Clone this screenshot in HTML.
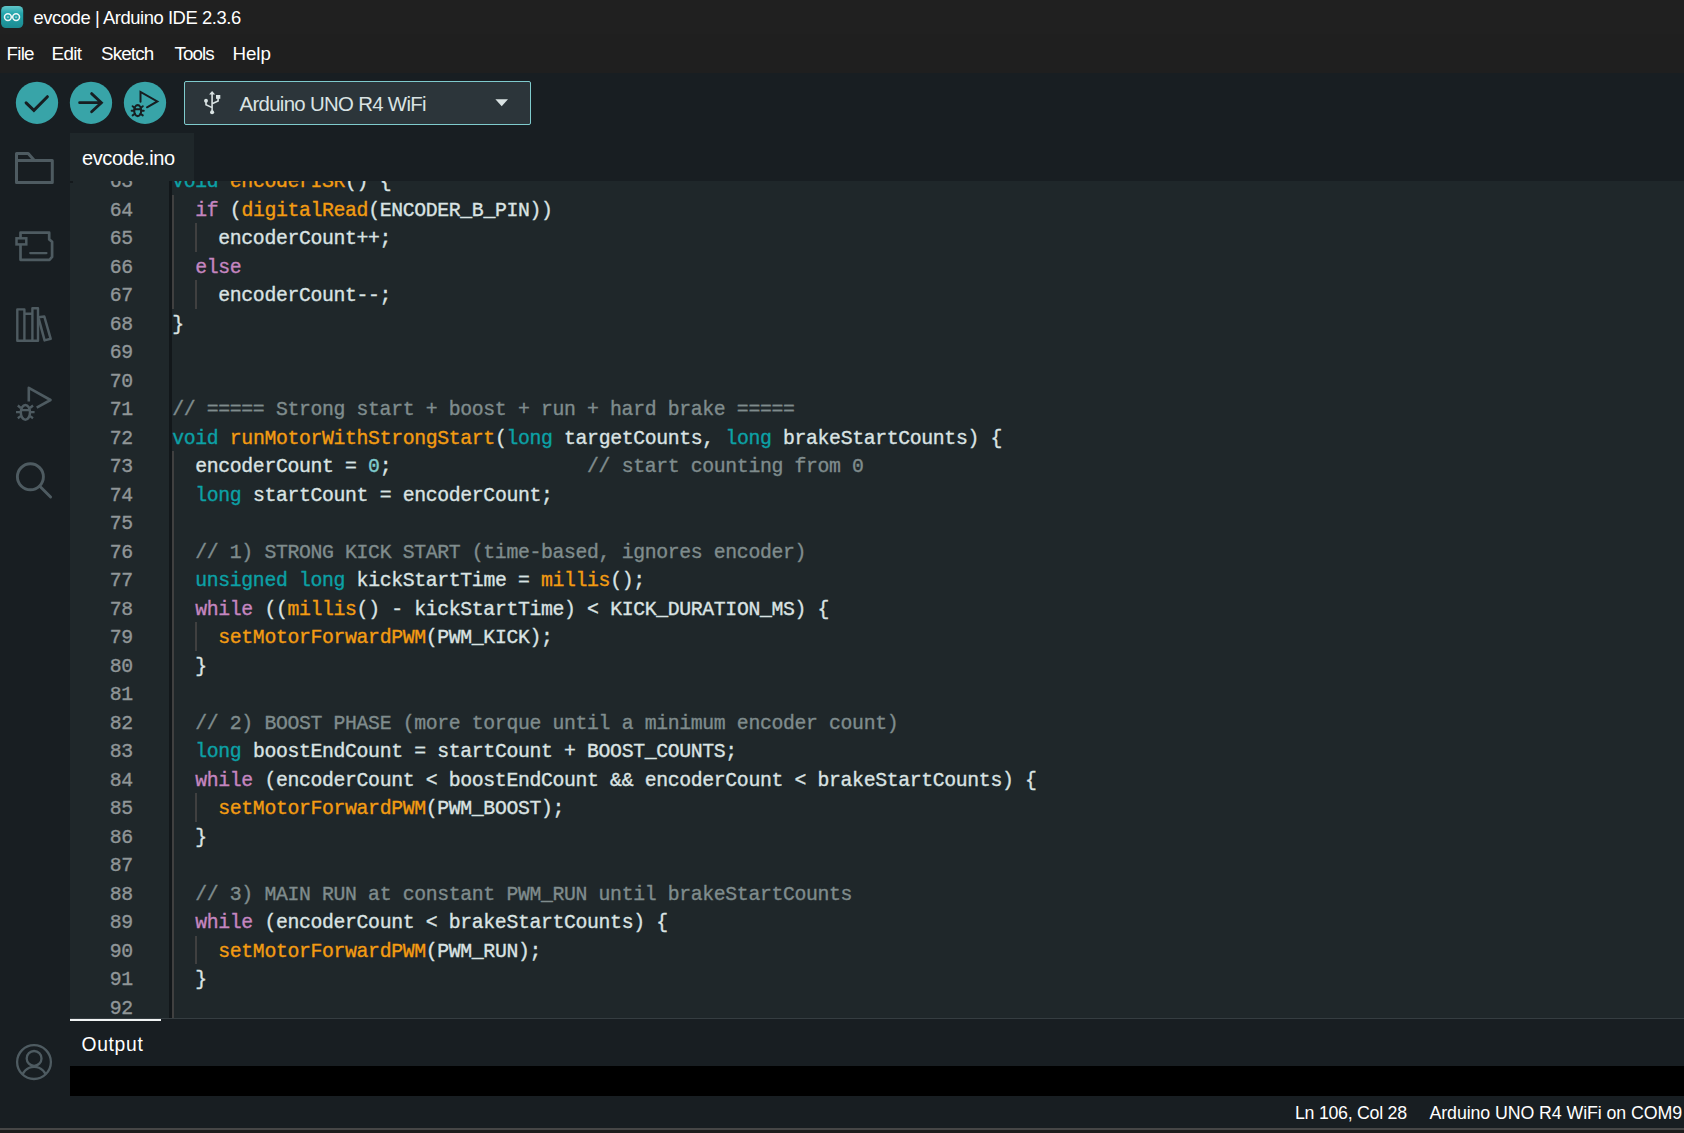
<!DOCTYPE html><html><head><meta charset="utf-8"><title>evcode | Arduino IDE 2.3.6</title><style>
*{margin:0;padding:0;box-sizing:border-box}
html,body{width:1684px;height:1133px;overflow:hidden;background:#181e22}
body{position:relative;font-family:"Liberation Sans",sans-serif}
.abs{position:absolute}
.t{position:absolute;white-space:pre;line-height:1;font-family:"Liberation Sans",sans-serif}
#editor{position:absolute;left:70px;top:181px;width:1614px;height:837px;background:#1f272a;overflow:hidden}
.ln,.cl{position:absolute;height:28.5px;line-height:28.5px;font-family:"Liberation Mono",monospace;font-size:19.8px;letter-spacing:-0.3469px;white-space:pre;-webkit-text-stroke-width:0.35px}
.ln{color:#909698;text-align:right;left:0;width:62.900000000000006px}
.cl{color:#dae3e3;left:102.19999999999999px}
.g{position:absolute;width:1.7px;background:#404040}
</style></head><body>
<div class="abs" style="left:0;top:0;width:1684px;height:34px;background:#202020"></div>
<div class="abs" style="left:0;top:34px;width:1684px;height:39px;background:#1f1f1f"></div>
<svg class="abs" style="left:0;top:5px" width="25" height="25" viewBox="0 0 25 25">
<defs><linearGradient id="lg" x1="0" y1="0" x2="0" y2="1"><stop offset="0" stop-color="#63c6c9"/><stop offset="0.35" stop-color="#23a5ab"/><stop offset="1" stop-color="#1c8a91"/></linearGradient></defs>
<rect x="1.1" y="0.9" width="22.1" height="22.2" rx="4.8" fill="url(#lg)"/>
<circle cx="7.9" cy="12.1" r="3.4" fill="none" stroke="#f2f7f7" stroke-width="1.5"/>
<circle cx="16.1" cy="12.1" r="3.4" fill="none" stroke="#f2f7f7" stroke-width="1.5"/>
<rect x="6.9" y="11.6" width="2" height="1" fill="#bfe3e4"/><rect x="15.1" y="11.6" width="2" height="1" fill="#bfe3e4"/>
</svg>
<svg class="abs" style="left:0;top:73px" width="180" height="60" viewBox="0 73 180 60">
<circle cx="37" cy="102.8" r="21.15" fill="#38a4a8"/>
<circle cx="91" cy="102.8" r="21.15" fill="#38a4a8"/>
<circle cx="145" cy="102.8" r="21.15" fill="#38a4a8"/>
<path d="M26.1 102.9 L33.9 110.3 L47.4 96.7" fill="none" stroke="#171e21" stroke-width="3" stroke-linecap="round" stroke-linejoin="miter"/>
<path d="M79.6 102.7 H101.2 M91.6 93.6 L101.4 102.7 L91.6 111.8" fill="none" stroke="#171e21" stroke-width="2.8" stroke-linecap="round" stroke-linejoin="miter"/>
<g fill="none" stroke="#171e21" stroke-width="2" stroke-linecap="round">
<path d="M140.5 101.8 V92 L157.3 101.4 L147 107.3" stroke-linejoin="miter"/>
<ellipse cx="137.7" cy="110.6" rx="3.5" ry="5.5" stroke-width="2.1"/>
<path d="M134.6 109.2 H140.8 M131.6 110.8 H134.2 M141.2 110.8 H143.8 M132.6 106.2 L134.8 107.9 M142.8 106.2 L140.6 107.9 M132.6 115.4 L135 113.7 M142.8 115.4 L140.4 113.7" stroke-width="1.9"/>
</g>
</svg>
<div class="abs" style="left:184px;top:80.8px;width:347.2px;height:44.3px;background:#2c353a;border:1.3px solid #7fcbcd;border-radius:2px"></div>
<svg class="abs" style="left:195px;top:83px" width="40" height="40" viewBox="195 83 40 40">
<g fill="#dae3e3" stroke="none">
<path d="M212.1 91 L215.1 94.4 H209.1 Z"/>
<circle cx="212.1" cy="112.2" r="2.05"/>
<circle cx="206" cy="100.8" r="1.95"/>
<rect x="216" y="95" width="4.3" height="3.8"/>
</g>
<path d="M212.1 94 V111 M212.1 107.6 L206 104.7 V101 M212.1 103.7 L218.1 101 V98" fill="none" stroke="#dae3e3" stroke-width="1.6"/>
</svg>
<svg class="abs" style="left:490px;top:95px" width="24" height="16" viewBox="490 95 24 16"><path d="M495.4 99.2 H508 L501.7 106.2 Z" fill="#dae3e3"/></svg>
<svg class="abs" style="left:0;top:133px" width="70" height="400" viewBox="0 133 70 400">
<g fill="none" stroke="#4e5b61">
<path d="M16.5 153.4 H28.2 L34.4 160.4 H52.3 V182.6 H16.5 Z M16.5 160.4 H34.4" stroke-width="3" stroke-linejoin="round"/>
<path d="M20.5 232.7 H49.2 V239.4 L52.1 241.7 V256.9 L49.5 259.8 H20.5 Z" stroke-width="2.7" stroke-linejoin="round"/>
<rect x="16.5" y="238.3" width="9.8" height="6.1" fill="#181e22" stroke-width="2.5"/>
<path d="M30.2 253.1 H46.5" stroke-width="2.2" stroke-linecap="round"/>
<path d="M17.3 340.7 V309.4 H24.4 V340.7 Z M24.4 313.7 H32.4 M32.4 340.7 V308.2 H38 V340.7 Z M24.4 340.7 H32.4" stroke-width="2.4" stroke-linejoin="round"/>
<path d="M38.3 317.2 L44.3 316.5 L50.7 338.8 L44.6 340.4 Z" stroke-width="2.5" stroke-linejoin="round"/>
<path d="M28.8 401.6 V387.8 L50.5 400 L36.7 407.7" stroke-width="2.6" stroke-linejoin="round"/>
<ellipse cx="25.4" cy="412.3" rx="4.6" ry="7.4" stroke-width="2.5"/>
<path d="M21 410.2 H29.8 M16 412.2 H20 M30.8 412.2 H34.6 M17.8 405.5 L20.8 408 M33 405.5 L30 408 M17.8 418.2 L21 415.9 M33 418.2 L29.8 415.9" stroke-width="2.3"/>
<circle cx="30.4" cy="476.8" r="13" stroke-width="2.9"/>
<path d="M39.8 486.2 L50.6 497" stroke-width="2.9" stroke-linecap="round"/>
</g></svg>
<svg class="abs" style="left:10px;top:1040px" width="50" height="46" viewBox="10 1040 50 46">
<defs><clipPath id="cp"><circle cx="34" cy="1062.1" r="17"/></clipPath></defs>
<g fill="none" stroke="#4e5b61" stroke-width="2.3">
<circle cx="34" cy="1062.1" r="16.9"/>
<circle cx="34.1" cy="1058.4" r="7.4"/>
<circle cx="34.1" cy="1079.4" r="12.6" clip-path="url(#cp)"/>
</g></svg>
<div class="abs" style="left:70px;top:133px;width:124px;height:48px;background:#1f272a"></div>
<div id="editor">
<div class="abs" style="left:99.2px;top:0;width:2.6px;height:837px;background:#12171a"></div>
<div class="abs" style="left:0;top:0;width:3px;height:2px;background:#14191c"></div>
<div class="g" style="left:102.05000000000001px;top:13.699999999999989px;height:114.0px"></div>
<div class="g" style="left:125.1px;top:42.19999999999999px;height:28.5px"></div>
<div class="g" style="left:125.1px;top:99.19999999999999px;height:28.5px"></div>
<div class="g" style="left:102.05000000000001px;top:270.2px;height:570.0px"></div>
<div class="g" style="left:125.1px;top:441.20000000000005px;height:28.5px"></div>
<div class="g" style="left:125.1px;top:612.2px;height:28.5px"></div>
<div class="g" style="left:125.1px;top:754.7px;height:28.5px"></div>
<div class="ln" style="top:-12.800000000000011px">63</div><div class="cl" style="top:-12.800000000000011px"><span style="color:#0ca1a6">void</span> <span style="color:#f39c12">encoderISR</span>() {</div>
<div class="ln" style="top:15.699999999999989px">64</div><div class="cl" style="top:15.699999999999989px">  <span style="color:#c586c0">if</span> (<span style="color:#f39c12">digitalRead</span>(ENCODER_B_PIN))</div>
<div class="ln" style="top:44.19999999999999px">65</div><div class="cl" style="top:44.19999999999999px">    encoderCount++;</div>
<div class="ln" style="top:72.69999999999999px">66</div><div class="cl" style="top:72.69999999999999px">  <span style="color:#c586c0">else</span></div>
<div class="ln" style="top:101.19999999999999px">67</div><div class="cl" style="top:101.19999999999999px">    encoderCount--;</div>
<div class="ln" style="top:129.7px">68</div><div class="cl" style="top:129.7px">}</div>
<div class="ln" style="top:158.2px">69</div><div class="cl" style="top:158.2px"></div>
<div class="ln" style="top:186.7px">70</div><div class="cl" style="top:186.7px"></div>
<div class="ln" style="top:215.2px">71</div><div class="cl" style="top:215.2px"><span style="color:#7f8c8d">// ===== Strong start + boost + run + hard brake =====</span></div>
<div class="ln" style="top:243.7px">72</div><div class="cl" style="top:243.7px"><span style="color:#0ca1a6">void</span> <span style="color:#f39c12">runMotorWithStrongStart</span>(<span style="color:#0ca1a6">long</span> targetCounts, <span style="color:#0ca1a6">long</span> brakeStartCounts) {</div>
<div class="ln" style="top:272.2px">73</div><div class="cl" style="top:272.2px">  encoderCount = <span style="color:#7fcbcd">0</span>;                 <span style="color:#7f8c8d">// start counting from 0</span></div>
<div class="ln" style="top:300.7px">74</div><div class="cl" style="top:300.7px">  <span style="color:#0ca1a6">long</span> startCount = encoderCount;</div>
<div class="ln" style="top:329.2px">75</div><div class="cl" style="top:329.2px"></div>
<div class="ln" style="top:357.70000000000005px">76</div><div class="cl" style="top:357.70000000000005px">  <span style="color:#7f8c8d">// 1) STRONG KICK START (time-based, ignores encoder)</span></div>
<div class="ln" style="top:386.20000000000005px">77</div><div class="cl" style="top:386.20000000000005px">  <span style="color:#0ca1a6">unsigned</span> <span style="color:#0ca1a6">long</span> kickStartTime = <span style="color:#f39c12">millis</span>();</div>
<div class="ln" style="top:414.70000000000005px">78</div><div class="cl" style="top:414.70000000000005px">  <span style="color:#c586c0">while</span> ((<span style="color:#f39c12">millis</span>() - kickStartTime) &lt; KICK_DURATION_MS) {</div>
<div class="ln" style="top:443.20000000000005px">79</div><div class="cl" style="top:443.20000000000005px">    <span style="color:#f39c12">setMotorForwardPWM</span>(PWM_KICK);</div>
<div class="ln" style="top:471.70000000000005px">80</div><div class="cl" style="top:471.70000000000005px">  }</div>
<div class="ln" style="top:500.20000000000005px">81</div><div class="cl" style="top:500.20000000000005px"></div>
<div class="ln" style="top:528.7px">82</div><div class="cl" style="top:528.7px">  <span style="color:#7f8c8d">// 2) BOOST PHASE (more torque until a minimum encoder count)</span></div>
<div class="ln" style="top:557.2px">83</div><div class="cl" style="top:557.2px">  <span style="color:#0ca1a6">long</span> boostEndCount = startCount + BOOST_COUNTS;</div>
<div class="ln" style="top:585.7px">84</div><div class="cl" style="top:585.7px">  <span style="color:#c586c0">while</span> (encoderCount &lt; boostEndCount &amp;&amp; encoderCount &lt; brakeStartCounts) {</div>
<div class="ln" style="top:614.2px">85</div><div class="cl" style="top:614.2px">    <span style="color:#f39c12">setMotorForwardPWM</span>(PWM_BOOST);</div>
<div class="ln" style="top:642.7px">86</div><div class="cl" style="top:642.7px">  }</div>
<div class="ln" style="top:671.2px">87</div><div class="cl" style="top:671.2px"></div>
<div class="ln" style="top:699.7px">88</div><div class="cl" style="top:699.7px">  <span style="color:#7f8c8d">// 3) MAIN RUN at constant PWM_RUN until brakeStartCounts</span></div>
<div class="ln" style="top:728.2px">89</div><div class="cl" style="top:728.2px">  <span style="color:#c586c0">while</span> (encoderCount &lt; brakeStartCounts) {</div>
<div class="ln" style="top:756.7px">90</div><div class="cl" style="top:756.7px">    <span style="color:#f39c12">setMotorForwardPWM</span>(PWM_RUN);</div>
<div class="ln" style="top:785.2px">91</div><div class="cl" style="top:785.2px">  }</div>
<div class="ln" style="top:813.7px">92</div><div class="cl" style="top:813.7px"></div>
</div>
<div class="abs" style="left:70px;top:1017.6px;width:1614px;height:1.4px;background:#353d41"></div>
<div class="abs" style="left:70px;top:1018.7px;width:91px;height:2.2px;background:#f0f3f3"></div>
<div class="abs" style="left:70px;top:1066px;width:1614px;height:30px;background:#000"></div>
<div class="abs" style="left:0;top:1127.6px;width:1684px;height:2.6px;background:#464646"></div>
<div class="abs" style="left:0;top:1130.2px;width:1684px;height:3px;background:#1c1c1c"></div>
<div class="t" id="title" style="left:33.50px;top:8.94px;font-size:18.4px;letter-spacing:-0.432px;color:#ffffff">evcode | Arduino IDE 2.3.6</div>
<div class="t" id="mFile" style="left:6.50px;top:45.08px;font-size:18.8px;letter-spacing:-0.733px;color:#ffffff">File</div>
<div class="t" id="mEdit" style="left:51.50px;top:45.08px;font-size:18.8px;letter-spacing:-0.600px;color:#ffffff">Edit</div>
<div class="t" id="mSketch" style="left:101.00px;top:45.08px;font-size:18.8px;letter-spacing:-0.840px;color:#ffffff">Sketch</div>
<div class="t" id="mTools" style="left:174.50px;top:45.08px;font-size:18.8px;letter-spacing:-0.900px;color:#ffffff">Tools</div>
<div class="t" id="mHelp" style="left:232.50px;top:45.08px;font-size:18.8px;letter-spacing:-0.067px;color:#ffffff">Help</div>
<div class="t" id="board" style="left:239.50px;top:94.14px;font-size:20.4px;letter-spacing:-0.689px;color:#dae3e3">Arduino UNO R4 WiFi</div>
<div class="t" id="tab" style="left:82.00px;top:148.00px;font-size:20px;letter-spacing:-0.400px;color:#ffffff">evcode.ino</div>
<div class="t" id="output" style="left:81.50px;top:1034.63px;font-size:19.3px;letter-spacing:0.680px;color:#ffffff">Output</div>
<div class="t" id="ln" style="left:1295.00px;top:1105.48px;font-size:17.8px;letter-spacing:-0.277px;color:#ffffff">Ln 106, Col 28</div>
<div class="t" id="port" style="left:1429.50px;top:1105.48px;font-size:17.8px;letter-spacing:-0.092px;color:#ffffff">Arduino UNO R4 WiFi on COM9</div>
</body></html>
